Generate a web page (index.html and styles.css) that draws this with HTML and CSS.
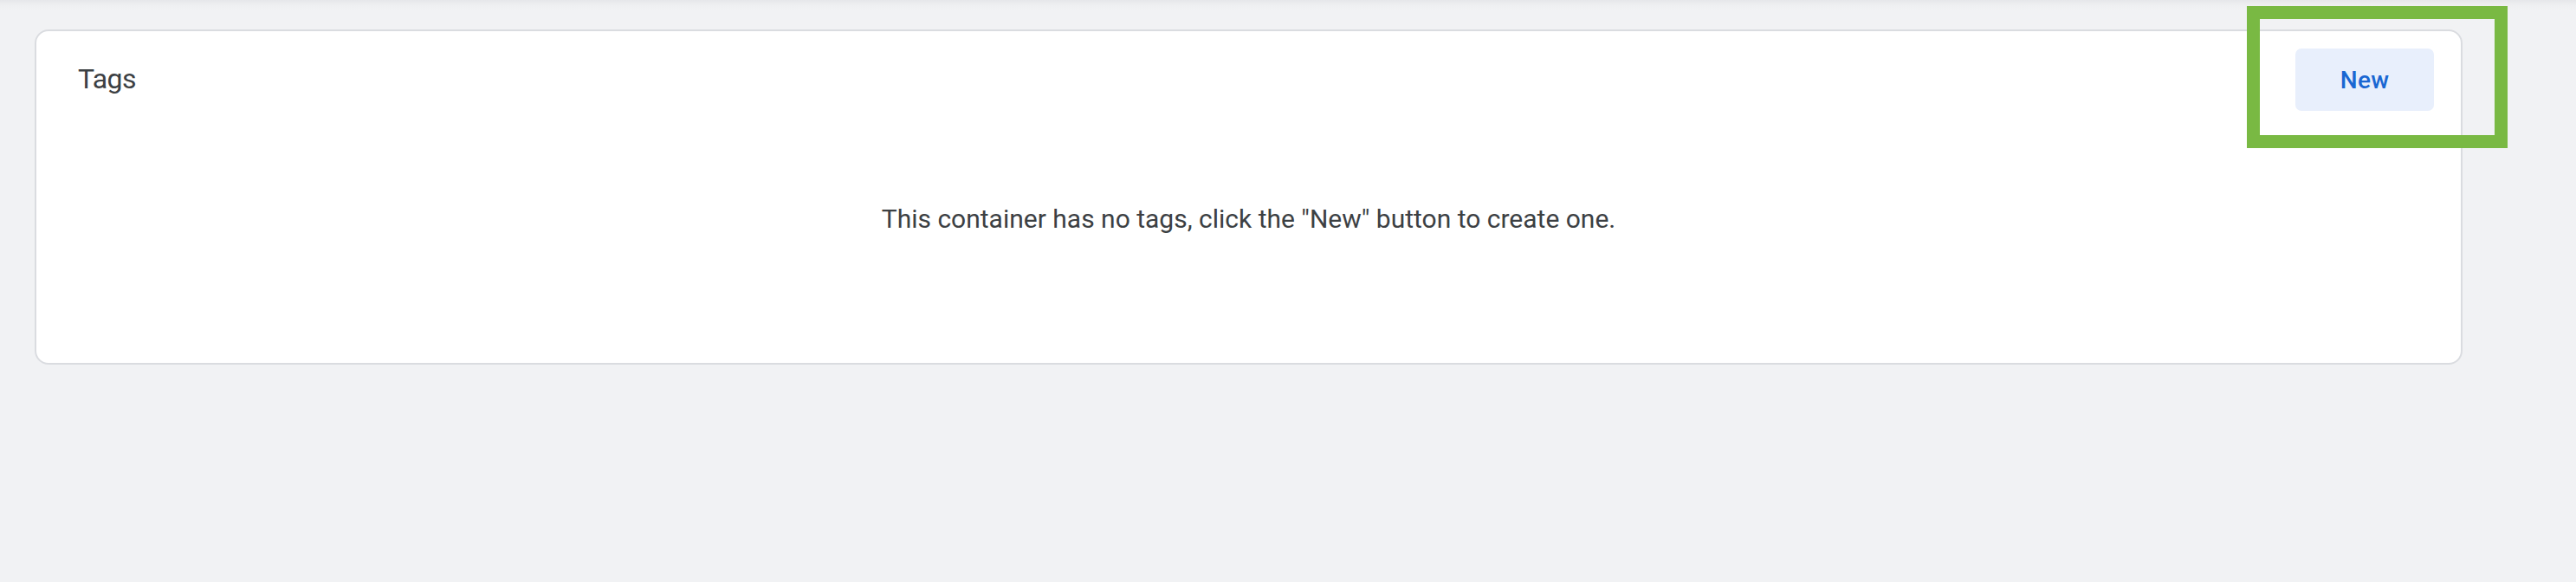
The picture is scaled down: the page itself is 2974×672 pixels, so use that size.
FILE: index.html
```html
<!DOCTYPE html>
<html lang="en">
<head>
<meta charset="utf-8">
<title>Tags</title>
<link rel="stylesheet" href="styles.css">
</head>
<body>
<div class="page">
  <div class="card">
    <div class="card-header">
      <div class="card-title">Tags</div>
      <button class="btn-new" type="button">New</button>
    </div>
    <div class="empty-msg">This container has no tags, click the "New" button to create one.</div>
  </div>
  <div class="highlight"></div>
</div>
</body>
</html>
```

FILE: styles.css
```css
html, body {
  margin: 0;
  padding: 0;
}
body {
  width: 2974px;
  height: 672px;
  background: linear-gradient(to bottom, #e6e7ea 0, #eeeff1 6px, #f1f2f4 11px) top left / 100% 11px no-repeat, #f1f2f4;
  font-family: Roboto, "Liberation Sans", Arial, sans-serif;
  overflow: hidden;
}
.page {
  position: relative;
  padding: 34px 131px 0 40px;
}
.card {
  box-sizing: border-box;
  height: 387px;
  background: #fff;
  border: 2px solid #dadce0;
  border-radius: 16px;
  display: flex;
  flex-direction: column;
}
.card-header {
  display: flex;
  justify-content: space-between;
  align-items: flex-start;
  padding: 20px 31px 0 48px;
}
.card-title {
  margin-top: 15px;
  font-size: 32px;
  line-height: 40px;
  letter-spacing: -0.6px;
  color: #3c4043;
  font-weight: 400;
}
.btn-new {
  width: 160px;
  height: 72px;
  border: none;
  border-radius: 7px;
  background: #e8effc;
  color: #1a67d2;
  font-family: Roboto, "Liberation Sans", Arial, sans-serif;
  font-size: 28px;
  font-weight: 500;
  letter-spacing: 0.3px;
  padding: 0;
}
.empty-msg {
  margin-top: 107px;
  text-align: center;
  font-size: 30px;
  line-height: 36px;
  color: #3c4043;
}
.highlight {
  position: absolute;
  left: 2594px;
  top: 7px;
  width: 301px;
  height: 164px;
  box-sizing: border-box;
  border: 15px solid #79b943;
}
```
